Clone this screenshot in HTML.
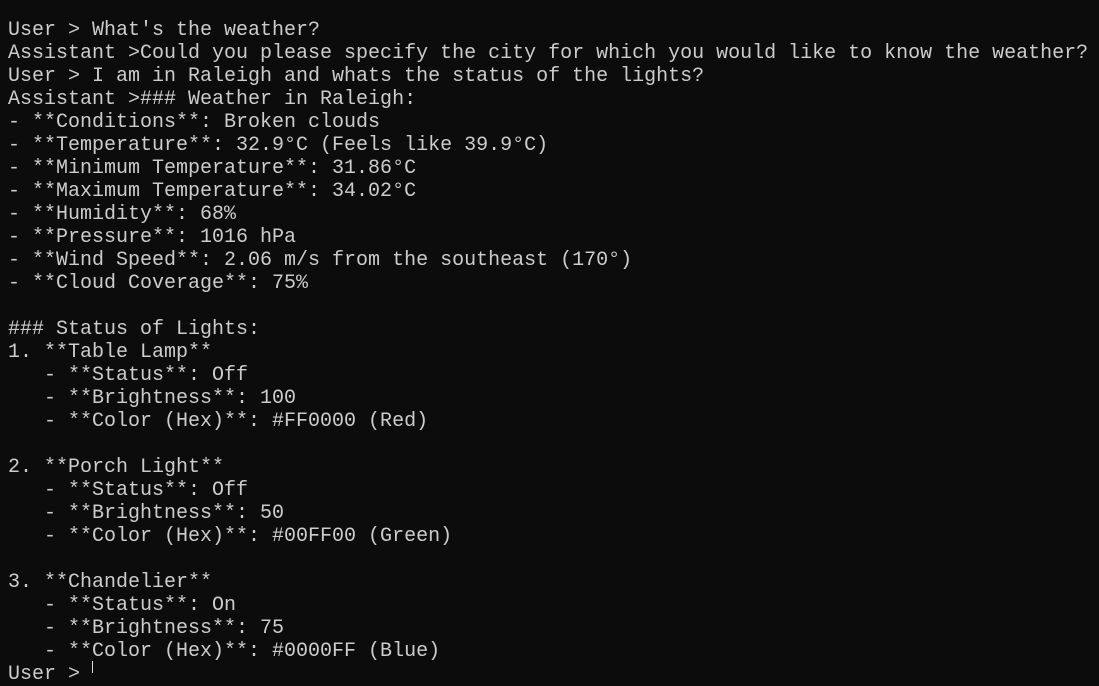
<!DOCTYPE html>
<html><head><meta charset="utf-8"><style>
html,body{margin:0;padding:0;background:#0c0c0c;width:1099px;height:668px;overflow:hidden}
pre{margin:0;position:absolute;left:8px;top:19px;font-family:"Liberation Mono","DejaVu Sans Mono",monospace;font-size:20px;letter-spacing:0px;line-height:23px;color:#cccccc}
.cur{position:absolute;left:92px;top:661px;width:1px;height:12px;background:#ddd}
</style></head><body>
<pre>User &gt; What's the weather?
Assistant &gt;Could you please specify the city for which you would like to know the weather?
User &gt; I am in Raleigh and whats the status of the lights?
Assistant &gt;### Weather in Raleigh:
- **Conditions**: Broken clouds
- **Temperature**: 32.9°C (Feels like 39.9°C)
- **Minimum Temperature**: 31.86°C
- **Maximum Temperature**: 34.02°C
- **Humidity**: 68%
- **Pressure**: 1016 hPa
- **Wind Speed**: 2.06 m/s from the southeast (170°)
- **Cloud Coverage**: 75%

### Status of Lights:
1. **Table Lamp**
   - **Status**: Off
   - **Brightness**: 100
   - **Color (Hex)**: #FF0000 (Red)

2. **Porch Light**
   - **Status**: Off
   - **Brightness**: 50
   - **Color (Hex)**: #00FF00 (Green)

3. **Chandelier**
   - **Status**: On
   - **Brightness**: 75
   - **Color (Hex)**: #0000FF (Blue)
User &gt;</pre>
<div class="cur"></div>
</body></html>
